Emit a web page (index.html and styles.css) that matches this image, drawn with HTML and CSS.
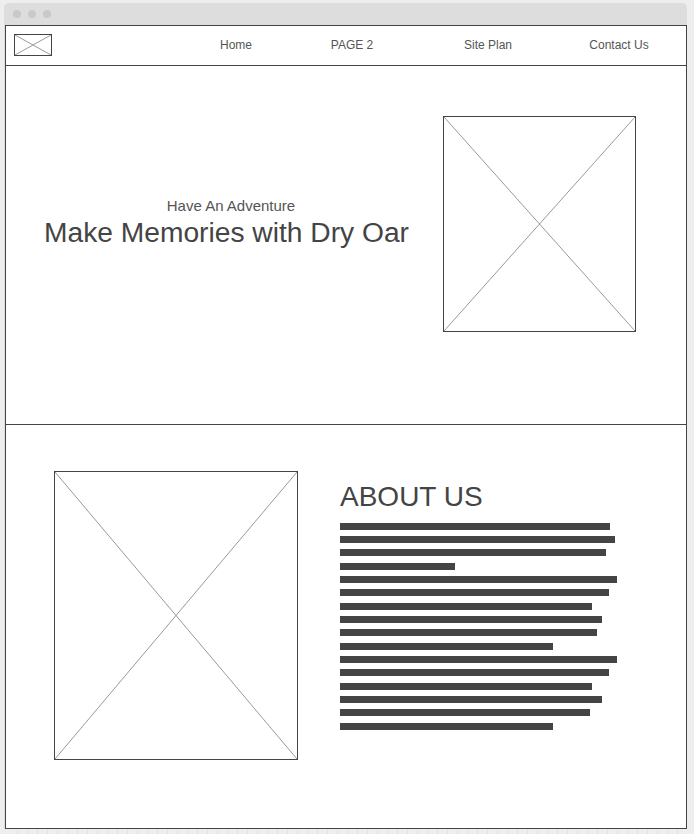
FILE: index.html
```html
<!DOCTYPE html>
<html>
<head>
<meta charset="utf-8">
<link rel="stylesheet" href="styles.css">
</head>
<body>
<div class="window">
  <div class="titlebar">
    <span class="dot"></span><span class="dot"></span><span class="dot"></span>
  </div>
  <div class="frame">
    <nav class="nav">
      <div class="logo ph">
        <svg viewBox="0 0 100 100" preserveAspectRatio="none"><line x1="0" y1="0" x2="100" y2="100"/><line x1="100" y1="0" x2="0" y2="100"/></svg>
      </div>
      <div class="links">
        <a class="link l1">Home</a>
        <a class="link l2">PAGE 2</a>
        <a class="link l3">Site Plan</a>
        <a class="link l4">Contact Us</a>
      </div>
    </nav>
    <section class="hero">
      <div class="hero-text">
        <div class="sub">Have An Adventure</div>
        <h1 class="title">Make Memories with Dry Oar</h1>
      </div>
      <div class="hero-img ph">
        <svg viewBox="0 0 100 100" preserveAspectRatio="none"><line x1="0" y1="0" x2="100" y2="100"/><line x1="100" y1="0" x2="0" y2="100"/></svg>
      </div>
    </section>
    <section class="about">
      <div class="about-img ph">
        <svg viewBox="0 0 100 100" preserveAspectRatio="none"><line x1="0" y1="0" x2="100" y2="100"/><line x1="100" y1="0" x2="0" y2="100"/></svg>
      </div>
      <div class="about-text">
        <h2 class="about-title">ABOUT US</h2>
        <div class="bars">
          <div class="bar" style="width:270px"></div>
          <div class="bar" style="width:275px"></div>
          <div class="bar" style="width:266px"></div>
          <div class="bar" style="width:115px"></div>
          <div class="bar" style="width:277px"></div>
          <div class="bar" style="width:269px"></div>
          <div class="bar" style="width:252px"></div>
          <div class="bar" style="width:262px"></div>
          <div class="bar" style="width:257px"></div>
          <div class="bar" style="width:213px"></div>
          <div class="bar" style="width:277px"></div>
          <div class="bar" style="width:269px"></div>
          <div class="bar" style="width:252px"></div>
          <div class="bar" style="width:262px"></div>
          <div class="bar" style="width:250px"></div>
          <div class="bar" style="width:213px"></div>
        </div>
      </div>
    </section>
  </div>
</div>
<div class="ruler"></div>
</body>
</html>
```

FILE: styles.css
```css
html, body {
  margin: 0;
  background: #eeeeee;
  font-family: "Liberation Sans", Arial, sans-serif;
}
body {
  padding: 3px 7px 0 4px;
  height: 834px;
  box-sizing: border-box;
  overflow: hidden;
}
.window {
  background: #dddddd;
  border-radius: 5px 5px 0 0;
  padding-left: 1px;
}
.titlebar {
  height: 22px;
  display: flex;
  align-items: center;
  gap: 7px;
  padding-left: 8px;
}
.dot {
  width: 8px;
  height: 8px;
  border-radius: 50%;
  background: #c9c9c9;
}
.frame {
  border: 1px solid #444444;
  background: #ffffff;
}
.ph {
  border: 1px solid #444444;
  box-sizing: border-box;
  background: #fff;
}
.ph svg {
  display: block;
  width: 100%;
  height: 100%;
}
.ph line {
  stroke: #999999;
  stroke-width: 1;
  vector-effect: non-scaling-stroke;
}
.nav {
  height: 39px;
  border-bottom: 1px solid #444444;
  display: flex;
  align-items: flex-start;
  padding-left: 8px;
}
.logo {
  width: 38px;
  height: 22px;
  margin-top: 8px;
}
.links {
  display: flex;
  margin-left: 126px;
  height: 37px;
  align-items: center;
}
.link {
  font-size: 12px;
  color: #555555;
  text-align: center;
}
.l1 { width: 116px; }
.l2 { width: 116px; }
.l3 { width: 156px; }
.l4 { width: 106px; }

.hero {
  border-bottom: 1px solid #444444;
  display: flex;
  align-items: flex-start;
  padding: 50px 50px 0 4px;
  box-sizing: border-box;
  height: 359px;
}
.hero-text {
  flex: 1;
  text-align: center;
  padding-top: 81px;
  color: #444444;
}
.sub {
  font-size: 15px;
  color: #555555;
  padding-left: 9px;
}
.title {
  margin: 2px 0 0;
  font-size: 28.2px;
  font-weight: normal;
  color: #444444;
}
.hero-img {
  width: 193px;
  height: 216px;
}
.about {
  height: 403px;
  display: flex;
  align-items: flex-start;
  padding: 46px 0 0 48px;
  box-sizing: border-box;
}
.about-img {
  width: 244px;
  height: 289px;
}
.about-text {
  margin-left: 42px;
  padding-top: 10px;
}
.about-title {
  margin: 0;
  font-size: 28px;
  font-weight: normal;
  color: #444444;
}
.bars {
  margin-top: 10px;
}
.bar {
  height: 7px;
  background: #444444;
  margin-top: 6px;
}
.bar:first-child {
  margin-top: 0;
}
.bar:nth-child(3n+4) {
  margin-top: 7px;
}
.ruler {
  height: 6px;
  background: repeating-linear-gradient(to right, transparent 0, transparent 9px, #e2e2e2 9px, #e2e2e2 10px);
  margin-left: 4px;
}
```
